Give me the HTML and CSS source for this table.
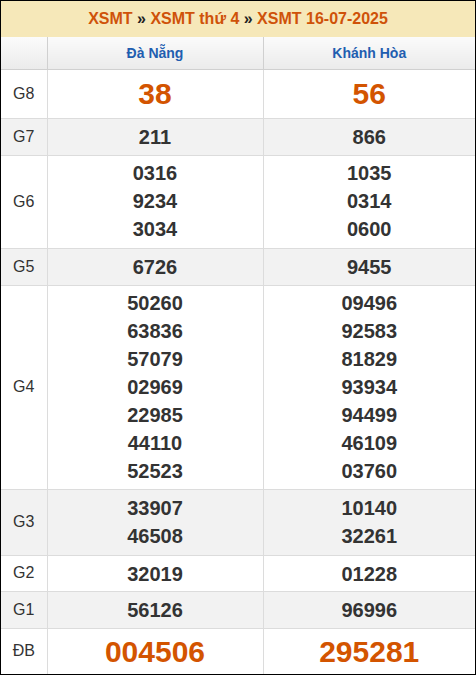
FILE: index.html
```html
<!DOCTYPE html>
<html lang="vi">
<head>
<meta charset="utf-8">
<title>XSMT 16-07-2025</title>
<link rel="stylesheet" href="styles.css">
</head>
<body>
<div class="box">
  <div class="title"><span class="o">XSMT</span> » <span class="o">XSMT thứ 4</span> » <span class="o">XSMT 16-07-2025</span></div>
  <table class="kq">
    <colgroup><col class="c1"><col class="c2"><col class="c3"></colgroup>
    <thead>
      <tr class="head"><th></th><th>Đà Nẵng</th><th>Khánh Hòa</th></tr>
    </thead>
    <tbody>
      <tr class="g8"><td class="lb">G8</td><td class="big">38</td><td class="big">56</td></tr>
      <tr class="alt one"><td class="lb">G7</td><td class="n">211</td><td class="n">866</td></tr>
      <tr><td class="lb">G6</td><td class="n">0316<br>9234<br>3034</td><td class="n">1035<br>0314<br>0600</td></tr>
      <tr class="alt one"><td class="lb">G5</td><td class="n">6726</td><td class="n">9455</td></tr>
      <tr class="g4"><td class="lb">G4</td><td class="n">50260<br>63836<br>57079<br>02969<br>22985<br>44110<br>52523</td><td class="n">09496<br>92583<br>81829<br>93934<br>94499<br>46109<br>03760</td></tr>
      <tr class="alt g3"><td class="lb">G3</td><td class="n">33907<br>46508</td><td class="n">10140<br>32261</td></tr>
      <tr class="g2"><td class="lb">G2</td><td class="n">32019</td><td class="n">01228</td></tr>
      <tr class="alt one"><td class="lb">G1</td><td class="n">56126</td><td class="n">96996</td></tr>
      <tr class="db"><td class="lb">ĐB</td><td class="big">004506</td><td class="big">295281</td></tr>
    </tbody>
  </table>
</div>
</body>
</html>
```
FILE: styles.css
```css
* { box-sizing: border-box; }
html, body { margin: 0; padding: 0; background: #fff; }
body { font-family: "Liberation Sans", Arial, sans-serif; color: #333; }

.box {
  width: 476px;
  border: 1px solid #000;
}

.title {
  height: 36px;
  background: #f6e8b9;
  text-align: center;
  font-size: 16px;
  font-weight: bold;
  line-height: 36px;
  color: #222;
}
.title .o { color: #cf5209; }

.kq {
  width: 474px;
  border-collapse: collapse;
  border-style: hidden;
  table-layout: fixed;
}
.c1 { width: 46px; }
.c2 { width: 216px; }
.c3 { width: 212px; }

.kq th, .kq td {
  border: 1px solid #dcdcdc;
  padding: 0;
  text-align: center;
  vertical-align: middle;
}

.kq .head th {
  height: 32px;
  background: linear-gradient(#fbfbfb, #ebebeb);
  border-color: #d0d0d0;
  color: #1f5eb0;
  font-size: 14px;
  font-weight: bold;
}

.kq .alt td { background: #f2f2f2; }

.kq .lb {
  font-size: 16px;
  color: #333;
}

.kq .n {
  font-size: 20px;
  font-weight: bold;
  line-height: 28px;
  padding: 3px 0 5px;
  color: #333;
}

.kq .big {
  font-size: 30px;
  font-weight: bold;
  color: #d35400;
  line-height: 34px;
}

.kq .g8 td { height: 49px; }
.kq .one .n { padding: 4px 0; }
.kq .g4 .n { padding: 3px 0 4px; }
.kq .g3 .n { padding: 4px 0 5px; }
.kq .g2 .n { padding: 4px 0 3px; }
.kq .db td { height: 46px; }
.kq .db .big { padding-top: 2px; }
```
